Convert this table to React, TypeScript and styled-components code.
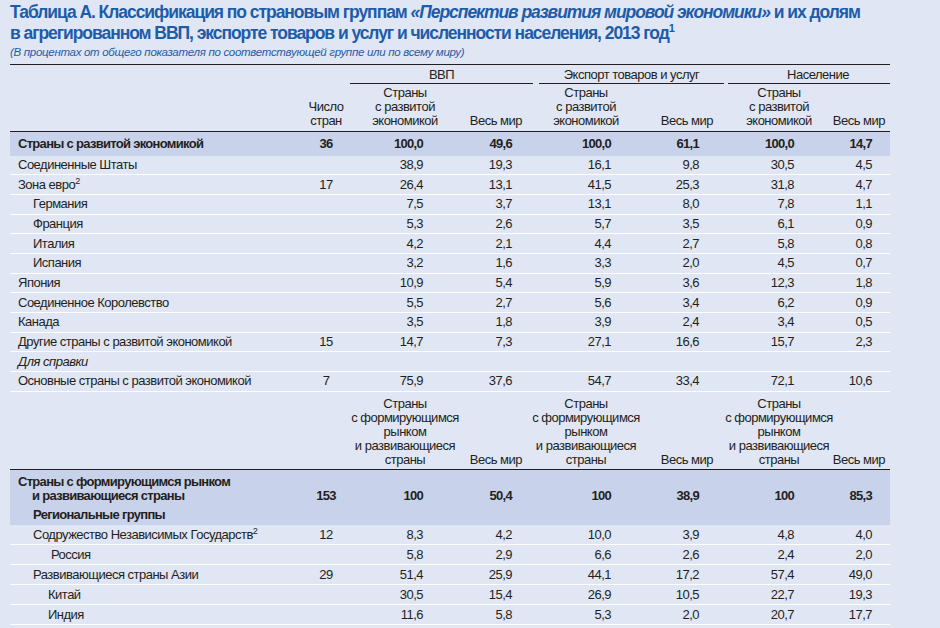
import styled, { createGlobalStyle } from "styled-components";

const COLS = "295px 45px 110px 73px 106px 85px 110px 56px";
// right padding of the number in each data column
const NUM_PAD = [37, 21, 28, 25, 40, 18];

type RowData = {
  label: string;
  sup?: string;
  indent: number;
  count?: string;
  values: string[];
  italic?: boolean;
};

const advanced: RowData[] = [
  { label: "Соединенные Штаты", indent: 18, values: ["38,9", "19,3", "16,1", "9,8", "30,5", "4,5"] },
  { label: "Зона евро", sup: "2", indent: 18, count: "17", values: ["26,4", "13,1", "41,5", "25,3", "31,8", "4,7"] },
  { label: "Германия", indent: 33, values: ["7,5", "3,7", "13,1", "8,0", "7,8", "1,1"] },
  { label: "Франция", indent: 33, values: ["5,3", "2,6", "5,7", "3,5", "6,1", "0,9"] },
  { label: "Италия", indent: 33, values: ["4,2", "2,1", "4,4", "2,7", "5,8", "0,8"] },
  { label: "Испания", indent: 33, values: ["3,2", "1,6", "3,3", "2,0", "4,5", "0,7"] },
  { label: "Япония", indent: 18, values: ["10,9", "5,4", "5,9", "3,6", "12,3", "1,8"] },
  { label: "Соединенное Королевство", indent: 18, values: ["5,5", "2,7", "5,6", "3,4", "6,2", "0,9"] },
  { label: "Канада", indent: 18, values: ["3,5", "1,8", "3,9", "2,4", "3,4", "0,5"] },
  { label: "Другие страны с развитой экономикой", indent: 18, count: "15", values: ["14,7", "7,3", "27,1", "16,6", "15,7", "2,3"] },
  { label: "Для справки", indent: 18, italic: true, values: [] },
  { label: "Основные страны с развитой экономикой", indent: 18, count: "7", values: ["75,9", "37,6", "54,7", "33,4", "72,1", "10,6"] },
];

const emerging: RowData[] = [
  { label: "Содружество Независимых Государств", sup: "2", indent: 33, count: "12", values: ["8,3", "4,2", "10,0", "3,9", "4,8", "4,0"] },
  { label: "Россия", indent: 51, values: ["5,8", "2,9", "6,6", "2,6", "2,4", "2,0"] },
  { label: "Развивающиеся страны Азии", indent: 33, count: "29", values: ["51,4", "25,9", "44,1", "17,2", "57,4", "49,0"] },
  { label: "Китай", indent: 48, values: ["30,5", "15,4", "26,9", "10,5", "22,7", "19,3"] },
  { label: "Индия", indent: 48, values: ["11,6", "5,8", "5,3", "2,0", "20,7", "17,7"] },
];

const GlobalStyle = createGlobalStyle`
  html, body {
    margin: 0;
    background: #e0e6f3;
  }
  body {
    font-family: "Liberation Sans", Arial, sans-serif;
    color: #231f20;
  }
`;

const Page = styled.div`
  padding: 2px 50px 0 10px;
  height: 628px;
  overflow: hidden;
  box-sizing: border-box;
`;

const Title = styled.h1`
  margin: 0;
  font-size: 17.5px;
  line-height: 20.5px;
  letter-spacing: -1.05px;
  font-weight: 700;
  color: #1d5ca8;
  white-space: nowrap;
  sup {
    font-size: 11px;
    line-height: 0;
    letter-spacing: 0;
  }
`;

const Subtitle = styled.p`
  margin: 2px 0 0;
  font-size: 11.5px;
  line-height: 14px;
  letter-spacing: -0.3px;
  font-style: italic;
  color: #1d5ca8;
`;

const Table = styled.div`
  margin-top: 5px;
  font-size: 13px;
  letter-spacing: -0.5px;
`;

const Head = styled.div<{ $top?: boolean }>`
  border-top: ${(p) => (p.$top ? "1px solid #231f20" : "none")};
  border-bottom: 1px solid #231f20;
`;

const Grid = styled.div`
  display: grid;
  grid-template-columns: ${COLS};
`;

const GroupRow = styled(Grid)`
  height: 19px;
`;

const Group = styled.div<{ $col: number; $gap: number; $shift: number }>`
  grid-column: ${(p) => `${p.$col} / span 2`};
  margin-left: ${(p) => p.$gap}px;
  padding: 2px 0 0 ${(p) => p.$shift}px;
  line-height: 16px;
  text-align: center;
  border-bottom: 1px solid #231f20;
`;

const SubHead = styled(Grid)<{ $pt: number; $pb: number }>`
  align-items: end;
  padding: ${(p) => p.$pt}px 0 ${(p) => p.$pb}px;
  line-height: 14px;
`;

const HeadCell = styled.div<{ $right?: number }>`
  display: flex;
  flex-direction: column;
  align-items: ${(p) => (p.$right !== undefined ? "flex-end" : "center")};
  padding-right: ${(p) => p.$right ?? 0}px;
  white-space: nowrap;
`;

const Row = styled(Grid)<{ $band?: boolean; $h: number; $line?: boolean }>`
  height: ${(p) => p.$h}px;
  box-sizing: border-box;
  align-items: center;
  line-height: 14px;
  background: ${(p) => (p.$band ? "#c8d2ea" : "transparent")};
  font-weight: ${(p) => (p.$band ? 700 : 400)};
  letter-spacing: ${(p) => (p.$band ? "-0.7px" : "-0.5px")};
  border-bottom: ${(p) => (p.$line ? "1px solid #ffffff" : "none")};
`;

const TallBand = styled(Row)`
  align-items: end;
  padding-bottom: 2.5px;
`;

const Label = styled.div<{ $indent: number; $italic?: boolean }>`
  padding-left: ${(p) => p.$indent - 10}px;
  font-style: ${(p) => (p.$italic ? "italic" : "normal")};
  white-space: nowrap;
  sup {
    font-size: 9px;
    line-height: 0;
    letter-spacing: 0;
  }
`;

const Count = styled.div`
  text-align: center;
  padding-right: 3px;
`;

const Num = styled.div<{ $pad: number }>`
  text-align: right;
  padding-right: ${(p) => p.$pad}px;
`;

const Indented = styled.div`
  padding-left: 14px;
`;

const DataRow = ({ row, h }: { row: RowData; h: number }) => (
  <Row $h={h} $line>
    <Label $indent={row.indent} $italic={row.italic}>
      {row.label}
      {row.sup && <sup>{row.sup}</sup>}
    </Label>
    <Count>{row.count}</Count>
    {row.values.map((v, i) => (
      <Num key={i} $pad={NUM_PAD[i]}>
        {v}
      </Num>
    ))}
  </Row>
);

const SubHeader = ({ lines, pt, pb, countHead }: { lines: string[]; pt: number; pb: number; countHead?: boolean }) => (
  <SubHead $pt={pt} $pb={pb}>
    <div />
    <Count>{countHead ? <>Число<br />стран</> : null}</Count>
    {[0, 1, 2].map((g) => [
      <HeadCell key={`d${g}`}>
        {lines.map((l, i) => (
          <span key={i}>{l}</span>
        ))}
      </HeadCell>,
      <HeadCell key={`w${g}`} $right={g === 2 ? 5 : 11}>
        Весь мир
      </HeadCell>,
    ])}
  </SubHead>
);

const App = () => {
  return (
    <Page>
      <GlobalStyle />
      <Title>
        Таблица А. Классификация по страновым группам <i>«Перспектив развития мировой экономики»</i> и их долям
        <br />
        в агрегированном ВВП, экспорте товаров и услуг и численности населения, 2013 год<sup>1</sup>
      </Title>
      <Subtitle>(В процентах от общего показателя по соответствующей группе или по всему миру)</Subtitle>
      <Table>
        <Head $top>
          <GroupRow>
            <Group $col={3} $gap={0} $shift={0}>ВВП</Group>
            <Group $col={5} $gap={6} $shift={0}>Экспорт товаров и услуг</Group>
            <Group $col={7} $gap={4} $shift={18}>Население</Group>
          </GroupRow>
          <SubHeader lines={["Страны", "с развитой", "экономикой"]} pt={1.5} pb={3} countHead />
        </Head>

        <Row $band $h={24}>
          <Label $indent={18}>Страны с развитой экономикой</Label>
          <Count>36</Count>
          {["100,0", "49,6", "100,0", "61,1", "100,0", "14,7"].map((v, i) => (
            <Num key={i} $pad={NUM_PAD[i]}>{v}</Num>
          ))}
        </Row>
        {advanced.map((r) => (
          <DataRow key={r.label} row={r} h={19.7} />
        ))}

        <Head>
          <SubHeader
            lines={["Страны", "с формирующимся", "рынком", "и развивающиеся", "страны"]}
            pt={5.5}
            pb={2}
          />
        </Head>

        <TallBand $band $h={35}>
          <Label $indent={18}>
            Страны с формирующимся рынком
            <Indented>и развивающиеся страны</Indented>
          </Label>
          <Count>153</Count>
          {["100", "50,4", "100", "38,9", "100", "85,3"].map((v, i) => (
            <Num key={i} $pad={NUM_PAD[i]}>{v}</Num>
          ))}
        </TallBand>
        <Row $band $h={20}>
          <Label $indent={33}>Региональные группы</Label>
        </Row>
        {emerging.map((r) => (
          <DataRow key={r.label} row={r} h={20} />
        ))}
      </Table>
    </Page>
  );
};

export default App;
